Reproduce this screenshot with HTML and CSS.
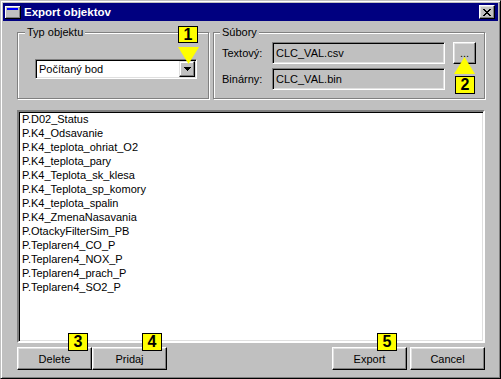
FILE: index.html
```html
<!DOCTYPE html>
<html>

<head>
    <title>Export objektov</title>
    <meta charset="utf-8">
    <link rel="stylesheet" href="styles.css">
</head>

<body>
    <div class="dialog">
        <div class="titlebar">
            <svg class="app-icon" width="16" height="13" viewBox="0 0 16 13">
                <rect x="0" y="0" width="16" height="13" fill="#000" />
                <rect x="0" y="0" width="15" height="12" fill="#fff" />
                <rect x="1" y="1" width="14" height="11" fill="#808080" />
                <rect x="1" y="1" width="13" height="10" fill="#c0c0c0" />
                <rect x="2" y="2" width="11" height="2" fill="#0000ff" />
            </svg>
            <span class="title">Export objektov</span>
            <button class="close-btn">
                <svg width="8" height="7" viewBox="0 0 8 7">
                    <path d="M0 0h2v1h-2zM6 0h2v1h-2zM1 1h2v1h-2zM5 1h2v1h-2zM2 2h4v1h-4zM3 3h2v1h-2zM2 4h4v1h-4zM1 5h2v1h-2zM5 5h2v1h-2zM0 6h2v1h-2zM6 6h2v1h-2z" fill="#000" />
                </svg>
            </button>
        </div>

        <div class="content">
            <div class="groups">
                <fieldset class="group group-type">
                    <legend>Typ objektu</legend>
                    <div class="combo">
                        <span class="combo-value">Počítaný bod</span>
                        <span class="combo-btn">
                            <svg width="7" height="4" viewBox="0 0 7 4">
                                <path d="M0 0h7v1h-7zM1 1h5v1h-5zM2 2h3v1h-3zM3 3h1v1h-1z" fill="#000" />
                            </svg>
                        </span>
                    </div>
                </fieldset>

                <fieldset class="group group-files">
                    <legend>Súbory</legend>
                    <div class="files-grid">
                        <span class="field-label">Textový:</span>
                        <div class="field">CLC_VAL.csv</div>
                        <button class="btn btn-browse">...</button>
                        <span class="field-label">Binárny:</span>
                        <div class="field">CLC_VAL.bin</div>
                    </div>
                </fieldset>
            </div>

            <ul class="listbox">
                <li>P.D02_Status</li>
                <li>P.K4_Odsavanie</li>
                <li>P.K4_teplota_ohriat_O2</li>
                <li>P.K4_teplota_pary</li>
                <li>P.K4_Teplota_sk_klesa</li>
                <li>P.K4_Teplota_sp_komory</li>
                <li>P.K4_teplota_spalin</li>
                <li>P.K4_ZmenaNasavania</li>
                <li>P.OtackyFilterSim_PB</li>
                <li>P.Teplaren4_CO_P</li>
                <li>P.Teplaren4_NOX_P</li>
                <li>P.Teplaren4_prach_P</li>
                <li>P.Teplaren4_SO2_P</li>
            </ul>

            <div class="actions">
                <div class="btn-row">
                    <button class="btn">Delete</button>
                    <button class="btn">Pridaj</button>
                </div>
                <div class="btn-row spaced">
                    <button class="btn">Export</button>
                    <button class="btn">Cancel</button>
                </div>
            </div>
        </div>

        <!-- popisky -->
        <div class="callout c1">1</div>
        <svg class="pointer p1" width="21" height="17" viewBox="0 0 21 17">
            <polygon points="0,0 21,0 10.5,17" fill="#ffff00" />
        </svg>
        <svg class="pointer p2" width="21" height="17" viewBox="0 0 21 17">
            <polygon points="10.5,0 0,17 21,17" fill="#ffff00" />
        </svg>
        <div class="callout c2">2</div>
        <div class="callout c3">3</div>
        <div class="callout c4">4</div>
        <div class="callout c5">5</div>
    </div>
</body>

</html>
```

FILE: styles.css
```css
body,
html {
    margin: 0;
    padding: 0;
}

body {
    font-family: "Liberation Sans", Arial, sans-serif;
    font-size: 11px;
    color: #000;
    background-color: #c0c0c0;
}

.dialog {
    position: relative;
    width: 501px;
    height: 379px;
    box-sizing: border-box;
    border: 1px solid;
    border-color: #c0c0c0 #000 #000 #c0c0c0;
    box-shadow: inset 1px 1px #fff, inset -1px -1px #808080;
    padding: 2px;
    background-color: #c0c0c0;
}

.titlebar {
    height: 18px;
    background-color: #000080;
    display: flex;
    align-items: center;
    padding: 0 3px 0 2px;
}

.app-icon {
    display: block;
}

.title {
    margin-left: 3px;
    color: #fff;
    font-weight: bold;
    font-size: 11.5px;
}

.close-btn {
    margin-left: auto;
    width: 16px;
    height: 14px;
    padding: 0;
    display: flex;
    align-items: center;
    justify-content: center;
    background-color: #c0c0c0;
    border: 1px solid;
    border-color: #fff #000 #000 #fff;
    box-shadow: inset -1px -1px #808080, inset 1px 1px #dfdfdf;
}

.content {
    padding: 5px 13px 0 14px;
}

.groups {
    display: flex;
    gap: 4px;
}

.group {
    margin: 0;
    padding: 0;
    min-width: 0;
    border: 1px solid #808080;
    box-shadow: inset 1px 1px #fff, 1px 1px #fff;
}

.group legend {
    font-size: 11px;
    line-height: 13px;
    padding: 0 2px;
    background-color: #c0c0c0;
}

.group-type {
    width: 192px;
    box-sizing: border-box;
}

.group-type legend {
    margin-left: 7px;
}

.group-files {
    width: 272px;
    box-sizing: border-box;
}

.group-files legend {
    margin-left: 6px;
}

/* combobox */
.combo {
    margin: 20px 0 0 17px;
    width: 162px;
    height: 20px;
    box-sizing: border-box;
    display: flex;
    align-items: stretch;
    background-color: #fff;
    border: 1px solid;
    border-color: #808080 #fff #fff #808080;
    box-shadow: inset 1px 1px #000, inset -1px -1px #dfdfdf;
    padding: 1px;
}

.combo-value {
    flex: 1;
    padding-left: 2px;
    line-height: 16px;
}

.combo-btn {
    width: 16px;
    box-sizing: border-box;
    display: flex;
    align-items: center;
    justify-content: center;
    background-color: #c0c0c0;
    border: 1px solid;
    border-color: #dfdfdf #000 #000 #dfdfdf;
    box-shadow: inset -1px -1px #808080, inset 1px 1px #fff;
}

/* subory */
.files-grid {
    display: grid;
    grid-template-columns: 42px 173px 23px;
    grid-template-rows: 22px 22px;
    column-gap: 8px;
    row-gap: 4px;
    margin-top: 3px;
    padding: 0 0 8px 8px;
    align-items: center;
}

.field {
    height: 22px;
    box-sizing: border-box;
    border: 1px solid;
    border-color: #808080 #fff #fff #808080;
    box-shadow: inset 1px 1px #000, inset -1px -1px #dfdfdf;
    padding-left: 3px;
    line-height: 20px;
    background-color: #c0c0c0;
}

.btn {
    height: 23px;
    width: 75px;
    box-sizing: border-box;
    padding: 0;
    font-family: "Liberation Sans", Arial, sans-serif;
    font-size: 11px;
    color: #000;
    background-color: #c0c0c0;
    border: 1px solid;
    border-color: #fff #000 #000 #fff;
    box-shadow: inset -1px -1px #808080, inset 1px 1px #dfdfdf;
}

.btn-browse {
    width: 23px;
    height: 22px;
}

/* zoznam */
.listbox {
    list-style: none;
    margin: 11px 0 0 0;
    padding: 0 3px;
    height: 233px;
    box-sizing: border-box;
    background-color: #fff;
    border: 2px solid;
    border-color: #808080 #fff #fff #808080;
    box-shadow: inset 1px 1px #000, inset -1px -1px #dfdfdf;
}

.listbox li {
    line-height: 14px;
}

.actions {
    margin-top: 4px;
    display: flex;
    justify-content: space-between;
}

.btn-row {
    display: flex;
}

.btn-row.spaced {
    gap: 3px;
}

/* zlte popisky */
.callout {
    position: absolute;
    width: 20px;
    height: 18px;
    box-sizing: border-box;
    background-color: #ffff00;
    border: 1px solid #000;
    font-weight: bold;
    font-size: 16px;
    line-height: 16px;
    text-align: center;
}

.pointer {
    position: absolute;
    display: block;
}

.c1 {
    left: 177px;
    top: 25px;
    height: 17px;
    line-height: 15px;
}

.p1 {
    left: 177px;
    top: 46px;
}

.p2 {
    left: 453px;
    top: 56px;
}

.c2 {
    left: 454px;
    top: 75px;
}

.c3 {
    left: 67px;
    top: 332px;
}

.c4 {
    left: 141px;
    top: 332px;
}

.c5 {
    left: 376px;
    top: 332px;
}
```
